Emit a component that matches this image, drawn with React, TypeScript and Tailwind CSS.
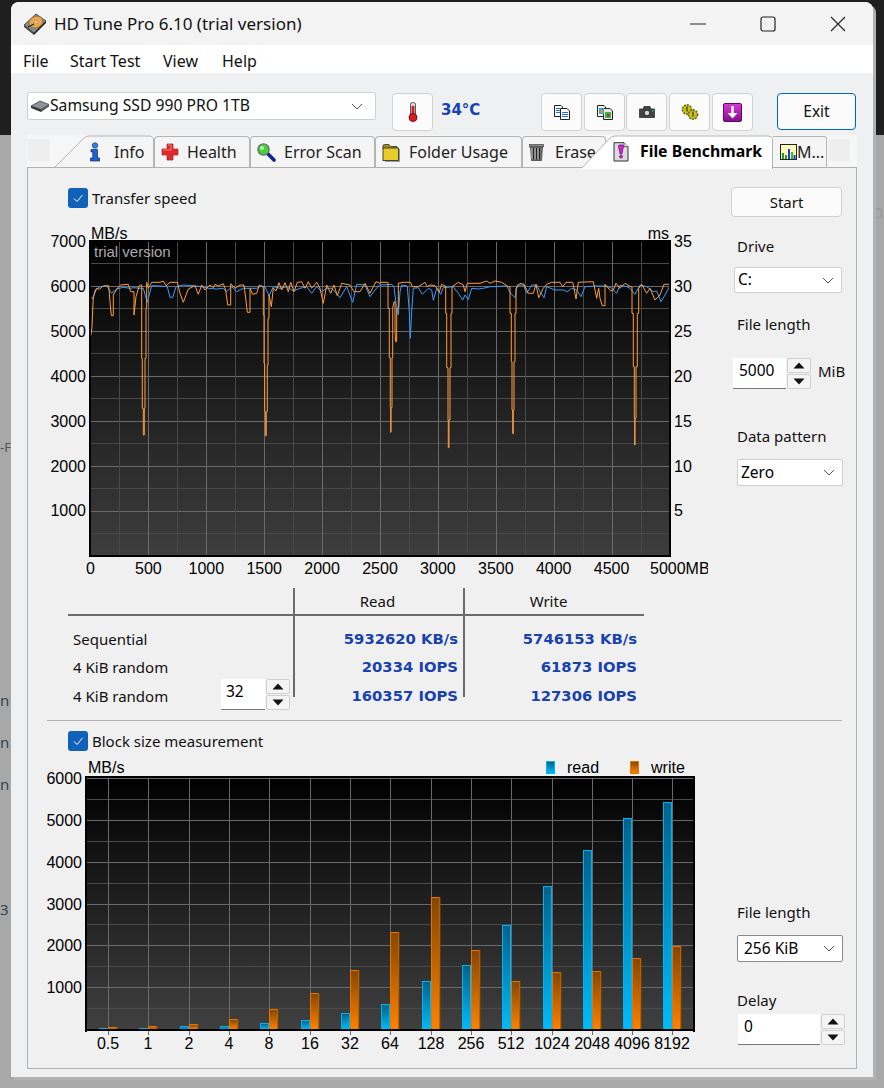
import React from "react";

const F = "[font-family:'Noto_Sans',sans-serif]";

const o3: number[][] = [[93,330],[96,305],[98,255],[100,215],[104,205],[110,190],[118,193],[130,183],[146,182],[150,230],[154,272],[160,210],[172,190],[182,180],[205,178],[212,200],[222,270],[228,215],[238,182],[242,180],[245,400],[247,550],[250,630],[253,550],[255,400],[258,250],[260,172],[265,190],[275,172],[300,172],[310,168],[318,182],[330,172],[352,172],[360,205],[370,232],[385,192],[405,182],[415,208],[425,180],[435,195],[450,180],[460,188],[465,178],[475,183],[490,176],[497,195],[503,240],[512,176],[525,190],[540,180],[552,180],[557,220],[562,262],[570,190],[578,208],[590,205],[598,180],[607,185],[610,270],[612,415],[614,560],[616,632],[619,560],[622,420],[624,280],[627,210],[634,245],[640,190],[648,198],[657,173],[665,195],[675,173],[685,200],[692,172],[702,200],[712,172],[725,170],[735,190],[745,170],[755,190],[770,172],[780,190],[790,235],[800,180],[812,205],[822,180],[832,212],[845,175],[870,180],[882,200],[900,200],[915,175],[930,205],[940,185],[948,170],[960,175]];
const b3: number[][] = [[93,215],[100,222],[105,195],[120,185],[140,183],[155,205],[170,192],[190,187],[210,190],[222,188],[240,190],[250,190],[262,232],[275,182],[300,183],[322,185],[330,217],[338,217],[348,185],[370,180],[400,182],[425,185],[445,190],[470,192],[490,190],[500,200],[515,185],[530,200],[550,190],[570,190],[590,190],[605,183],[615,185],[627,212],[640,185],[660,190],[680,185],[700,198],[720,190],[740,185],[755,205],[770,185],[785,200],[800,190],[815,190],[840,218],[860,185],[878,232],[890,178],[915,180],[930,215],[945,195],[960,178]];
const o4: number[][] = [[0,172],[22,172],[24,250],[28,398],[31,548],[32,622],[33,548],[36,398],[38,250],[42,230],[45,320],[47,350],[50,250],[55,175],[70,172],[92,172],[97,185],[115,185],[135,172],[142,185],[150,180],[165,182],[178,200],[185,178],[195,183],[197,265],[200,428],[204,585],[205,668],[207,585],[210,428],[213,265],[216,185],[235,172],[250,180],[255,200],[262,175],[300,175],[320,168],[330,175],[345,168],[365,172],[385,185],[390,265],[394,410],[396,555],[398,626],[400,555],[402,410],[405,265],[408,190],[420,175],[432,178],[445,205],[460,205],[468,178],[476,218],[490,190],[500,178],[515,172],[540,172],[548,185],[558,172],[578,172],[585,205],[588,222],[595,172],[640,170],[645,195],[650,220],[656,190],[660,220],[667,242],[675,178],[692,198],[700,195],[708,175],[720,190],[735,175],[752,185],[756,265],[760,425],[763,580],[764,660],[765,580],[768,425],[772,265],[776,190],[785,178],[800,205],[810,190],[825,225],[840,210],[852,178],[868,178]];
const b4: number[][] = [[0,180],[35,178],[42,185],[48,235],[55,270],[60,200],[65,180],[82,183],[88,260],[91,340],[95,260],[100,190],[115,188],[127,208],[145,190],[155,195],[160,226],[170,190],[182,208],[190,188],[220,185],[235,205],[248,225],[255,210],[265,224],[275,190],[295,192],[310,190],[330,185],[380,183],[392,205],[405,218],[412,180],[430,180],[440,205],[455,180],[470,180],[480,200],[492,218],[500,185],[525,195],[550,195],[562,200],[575,190],[590,195],[603,215],[615,185],[650,183],[680,183],[695,190],[710,205],[720,180],[740,185],[750,190],[765,208],[780,180],[800,185],[820,200],[830,198],[843,230],[855,210],[868,185]];

const pts = (a: number[][], ox: number) => a.map(([x, y]) => `${(x / 3 + ox).toFixed(1)},${(y / 3 + 225).toFixed(1)}`).join(" ");

// Large jumps in the write trace are drawn as stairs, as the original plot does.
const stairs = (a: number[][]) => {
  const out: number[][] = [];
  a.forEach((p, i) => {
    if (i > 0 && Math.abs(p[1] - a[i - 1][1]) > 60) out.push([p[0], a[i - 1][1]]);
    out.push(p);
  });
  return out;
};

function SpeedChart() {
  const hs = Array.from({ length: 15 }, (_, i) => 241 + 22.5 * i);
  const vs = Array.from({ length: 20 }, (_, i) => 90 + 29 * i);
  return (
    <svg width={664} height={352} viewBox="44 225 664 352" className="block" fontFamily="'Liberation Sans',sans-serif" fontSize={16} fill="#000">
      <defs>
        <linearGradient id="g1" x1="0" y1="0" x2="0" y2="1">
          <stop offset="0" stopColor="#000" />
          <stop offset="1" stopColor="#3e3e3e" />
        </linearGradient>
      </defs>
      <rect x={90} y={241} width={580} height={315} fill="url(#g1)" />
      {hs.map((y, i) => (
        <line key={i} x1={90} x2={670} y1={Math.floor(y) + 0.5} y2={Math.floor(y) + 0.5} stroke={i % 2 === 0 ? "#6a6a6a" : "#484848"} />
      ))}
      {vs.map((x, i) => (
        <line key={i} x1={x + 0.5} x2={x + 0.5} y1={241} y2={556} stroke={i % 2 === 0 ? "#6a6a6a" : "#484848"} />
      ))}
      <polyline points={pts(b3, 60)} fill="none" stroke="#3c9bff" strokeWidth={1} />
      <polyline points={pts(b4, 380)} fill="none" stroke="#3c9bff" strokeWidth={1} />
      <polyline points={pts(stairs(o3), 60)} fill="none" stroke="#ff9c3e" strokeWidth={1} />
      <polyline points={pts(stairs(o4), 380)} fill="none" stroke="#ff9c3e" strokeWidth={1} />
      <rect x={89} y={240} width={582} height={2} fill="#000" />
      <rect x={89} y={240} width={2} height={317} fill="#000" />
      <rect x={89} y={555} width={582} height={2} fill="#000" />
      <rect x={669} y={240} width={2} height={317} fill="#000" />
      <text x={91} y={239}>MB/s</text>
      <text x={669} y={239} textAnchor="end">ms</text>
      <text x={94} y={257} fontSize={15} fill="#a8a8a8">trial version</text>
      {[7000, 6000, 5000, 4000, 3000, 2000, 1000].map((v, i) => (
        <text key={v} x={86} y={247 + 44.9 * i} textAnchor="end">{v}</text>
      ))}
      {[35, 30, 25, 20, 15, 10, 5].map((v, i) => (
        <text key={v} x={674} y={247 + 44.9 * i}>{v}</text>
      ))}
      {[0, 500, 1000, 1500, 2000, 2500, 3000, 3500, 4000, 4500].map((v, i) => (
        <text key={v} x={90.5 + 57.9 * i} y={574} textAnchor="middle">{v}</text>
      ))}
      <text x={650} y={574}>5000MB</text>
    </svg>
  );
}

const reads = [1028, 1028, 1026, 1026, 1023, 1020, 1013, 1004, 981, 965, 925, 886, 850, 818, 802];
const writes = [1027, 1026, 1024, 1019, 1009, 993, 970, 932, 897, 950, 981, 972, 971, 958, 946];
const cats = ["0.5", "1", "2", "4", "8", "16", "32", "64", "128", "256", "512", "1024", "2048", "4096", "8192"];

function BlockChart() {
  const hs = Array.from({ length: 12 }, (_, i) => 778 + 20.92 * i);
  const c = (i: number) => Math.round(108 + 40.32 * i);
  return (
    <svg width={664} height={300} viewBox="44 756 664 300" className="block" fontFamily="'Liberation Sans',sans-serif" fontSize={16} fill="#000">
      <defs>
        <linearGradient id="g2" x1="0" y1="0" x2="0" y2="1">
          <stop offset="0" stopColor="#000" />
          <stop offset="1" stopColor="#404040" />
        </linearGradient>
        <linearGradient id="rb" x1="0" y1="0" x2="0" y2="1">
          <stop offset="0" stopColor="#00628a" />
          <stop offset="1" stopColor="#00bcfc" />
        </linearGradient>
        <linearGradient id="wb" x1="0" y1="0" x2="0" y2="1">
          <stop offset="0" stopColor="#854600" />
          <stop offset="1" stopColor="#ff8200" />
        </linearGradient>
      </defs>
      <rect x={87} y={778} width={607} height={252} fill="url(#g2)" />
      {hs.map((y, i) => (
        <line key={i} x1={87} x2={695} y1={Math.round(y) + 0.5} y2={Math.round(y) + 0.5} stroke={i % 2 === 0 ? "#6a6a6a" : "#4a4a4a"} />
      ))}
      {cats.map((_, i) => (
        <line key={i} x1={c(i) + 0.5} x2={c(i) + 0.5} y1={778} y2={1035} stroke="#6a6a6a" />
      ))}
      {cats.map((_, i) => (
        <g key={i}>
          <rect x={c(i) - 8.5} y={reads[i] + 0.5} width={8} height={1029 - reads[i]} fill="url(#rb)" stroke="#00b4f4" />
          <rect x={c(i) + 0.5} y={writes[i] + 0.5} width={8} height={1029 - writes[i]} fill="url(#wb)" stroke="#e87400" />
          <line x1={c(i) + 9} x2={c(i) + 9} y1={writes[i]} y2={1029} stroke="#8a4a00" />
        </g>
      ))}
      <rect x={85} y={776} width={610} height={2} fill="#000" />
      <rect x={85} y={776} width={2} height={256} fill="#000" />
      <rect x={85} y={1029} width={610} height={2} fill="#000" />
      <rect x={693} y={776} width={2} height={256} fill="#000" />
      {cats.map((_, i) => (
        <line key={i} x1={c(i) + 0.5} x2={c(i) + 0.5} y1={1031} y2={1035} stroke="#6a6a6a" />
      ))}
      <text x={88} y={773}>MB/s</text>
      {[6000, 5000, 4000, 3000, 2000, 1000].map((v, i) => (
        <text key={v} x={82} y={784 + 41.84 * i} textAnchor="end">{v}</text>
      ))}
      {cats.map((t, i) => (
        <text key={t} x={c(i)} y={1049} textAnchor="middle">{t}</text>
      ))}
      <rect x={546.5} y={761.5} width={8} height={12} fill="url(#rb)" stroke="#00b4f4" />
      <text x={567} y={773}>read</text>
      <rect x={630.5} y={761.5} width={8} height={12} fill="url(#wb)" stroke="#e87400" />
      <text x={651} y={773}>write</text>
    </svg>
  );
}

const Check = () => (
  <span className="w-[20px] h-[20px] rounded-[3px] bg-[#0f62b8] flex items-center justify-center shrink-0">
    <svg width="12" height="12" viewBox="0 0 12 12" fill="none" stroke="#fff" strokeWidth="1">
      <path d="M2 6.5 L5 9.5 L10.5 3" />
    </svg>
  </span>
);

const Chevron = () => (
  <svg width="12" height="7" viewBox="0 0 12 7" fill="none" stroke="#555" strokeWidth="1">
    <path d="M1 1 L6 6 L11 1" />
  </svg>
);

function Select({ text, className, dark }: { text: string; className: string; dark?: boolean }) {
  return (
    <div className={`${className} ${dark ? "border-[#8a8a8a]" : "border-[#cfcfcf]"} bg-white border rounded-[2px] flex items-center justify-between pr-[7px] text-[15.5px] text-black`}>
      <span className="leading-none">{text}</span>
      <Chevron />
    </div>
  );
}

function Spin() {
  return (
    <div className="flex flex-col justify-between w-[24px] h-full">
      <div className="h-[15px] bg-[#f4f4f4] border border-[#d0d0d0] rounded-[2px] flex items-center justify-center">
        <svg width="12" height="7" viewBox="0 0 12 7"><path d="M6 0.5 L11.5 6.5 H0.5 Z" fill="#111" /></svg>
      </div>
      <div className="h-[15px] bg-[#f4f4f4] border border-[#d0d0d0] rounded-[2px] flex items-center justify-center">
        <svg width="12" height="7" viewBox="0 0 12 7"><path d="M0.5 0.5 H11.5 L6 6.5 Z" fill="#111" /></svg>
      </div>
    </div>
  );
}

function Spinner({ value, w, pl }: { value: string; w: string; pl: string }) {
  return (
    <div className="flex h-[31px] gap-[1px]">
      <div className={`${w} ${pl} bg-white border-b border-[#7a7a7a] text-[15.5px] text-black leading-[24px]`}>{value}</div>
      <Spin />
    </div>
  );
}

/* ---------- icons ---------- */
const DiskLogo = () => (
  <svg width="24" height="24" viewBox="0 0 24 24">
    <path d="M1 13 L13 2 L23 9 L11 21 Z" fill="#8a8a8a" stroke="#333" strokeWidth="0.8" />
    <path d="M1 13 L11 21 L11 23 L1 15 Z" fill="#444" />
    <path d="M11 21 L23 9 L23 11 L11 23 Z" fill="#222" />
    <ellipse cx="13" cy="10" rx="7" ry="5.5" transform="rotate(-25 13 10)" fill="#e8a64f" stroke="#9a6a28" strokeWidth="0.6" />
    <circle cx="13" cy="10" r="1.6" fill="#f6d9a6" stroke="#9a6a28" strokeWidth="0.4" />
    <path d="M5 15 L11 12" stroke="#222" strokeWidth="1.2" />
  </svg>
);
const InfoIcon = () => (
  <svg width="14" height="20" viewBox="0 0 14 20">
    <circle cx="7" cy="3.5" r="2.8" fill="#2f7fe8" stroke="#12357e" strokeWidth="0.6" />
    <path d="M3 7.5 H9.5 V16 H11.5 V19 H2.5 V16 H4.8 V10 H3 Z" fill="#1d62d6" stroke="#0d2660" strokeWidth="0.7" />
  </svg>
);
const CrossIcon = () => (
  <svg width="18" height="18" viewBox="0 0 18 18">
    <path d="M6 1 H12 V6 H17 V12 H12 V17 H6 V12 H1 V6 H6 Z" fill="#e5292b" stroke="#8c3a3a" strokeWidth="0.8" />
    <path d="M7 2 H10 V7 H2 V7" fill="none" stroke="#ff8d8d" strokeWidth="0.8" />
  </svg>
);
const SearchIcon = () => (
  <svg width="20" height="20" viewBox="0 0 20 20">
    <path d="M11 11 L18 18" stroke="#12288c" strokeWidth="3.6" strokeLinecap="round" />
    <circle cx="7.5" cy="7.5" r="5.6" fill="#46d23a" stroke="#6a6a6a" strokeWidth="1.3" />
    <circle cx="6" cy="6" r="2" fill="#b6f5a8" />
  </svg>
);
const FolderIcon = () => (
  <svg width="18" height="19" viewBox="0 0 18 19">
    <path d="M1 3 Q1 1.5 2.5 1.5 H7 L9 3.5 H15 V6 H1 Z" fill="#a08a18" stroke="#333" strokeWidth="0.8" />
    <rect x="1" y="5" width="15.5" height="12.5" fill="#e8cd2a" stroke="#333" strokeWidth="0.9" />
    <path d="M17.5 6 V18.5 H3" fill="none" stroke="#999" strokeWidth="1" />
  </svg>
);
const TrashIcon = () => (
  <svg width="15" height="18" viewBox="0 0 15 18">
    <rect x="0.5" y="1.5" width="14" height="2.5" fill="#8a8a8a" stroke="#333" strokeWidth="0.6" />
    <path d="M1.5 4 H13.5 L12.5 17.5 H2.5 Z" fill="#7a7a7a" stroke="#333" strokeWidth="0.7" />
    <path d="M4.5 5 V16.5 M7.5 5 V16.5 M10.5 5 V16.5" stroke="#222" strokeWidth="1.3" />
    <path d="M3 5 V16 M6 5 V16 M9 5 V16" stroke="#c8c8c8" strokeWidth="0.8" />
  </svg>
);
const BenchIcon = () => (
  <svg width="16" height="20" viewBox="0 0 16 20">
    <path d="M1 0.7 H11 L15 4.7 V19 H1 Z" fill="#dcdcdc" stroke="#333" strokeWidth="1" />
    <path d="M11 0.7 V4.7 H15" fill="#fff" stroke="#333" strokeWidth="0.8" />
    <path d="M5.3 3.5 Q8 2 10.7 3.5 L9 12 H7 Z" fill="#d020d8" stroke="#5a0a60" strokeWidth="0.6" />
    <circle cx="8" cy="14.6" r="1.6" fill="#d020d8" stroke="#5a0a60" strokeWidth="0.5" />
  </svg>
);
const ChartIcon = () => (
  <svg width="17" height="16" viewBox="0 0 17 16">
    <rect x="0.5" y="0.5" width="16" height="15" fill="#fdfdb8" stroke="#222" />
    <path d="M2 15 V9 H4 V15 Z M5 15 V11 H7 V15 Z" fill="#1f9d2a" />
    <path d="M8 15 V5 H10 V15 Z" fill="#2c2cf0" />
    <path d="M11 15 V8 H13 V15 Z" fill="#14d414" />
    <path d="M13.5 15 V11 H15.5 V15 Z" fill="#2c2cf0" />
  </svg>
);
const Thermo = () => (
  <svg width="12" height="20" viewBox="0 0 12 20">
    <rect x="3.5" y="0.5" width="5" height="14" rx="2" fill="#d8d8d8" stroke="#333" strokeWidth="0.8" />
    <rect x="4.6" y="4" width="2.8" height="11" fill="#d81820" />
    <circle cx="6" cy="15.5" r="4" fill="#e01a20" stroke="#4a0a0a" strokeWidth="0.8" />
  </svg>
);
const CopyDocs = ({ pics }: { pics?: boolean }) => (
  <svg width="16" height="15" viewBox="0 0 16 15">
    <path d="M0.5 0.5 H7 L8.5 2 V11.5 H0.5 Z" fill="#fff" stroke="#222" />
    <path d="M6.5 3.5 H13 L15.5 6 V14.5 H6.5 Z" fill={pics ? "#e8e8e8" : "#fff"} stroke="#222" />
    {pics ? (
      <>
        <rect x="2" y="3" width="5" height="6" fill="#27a7df" />
        <rect x="3" y="5" width="3" height="3" fill="#e98a2c" />
        <rect x="8" y="7" width="6" height="6" fill="#2cb84c" />
        <rect x="10" y="9" width="2.5" height="2.5" fill="#d82020" />
      </>
    ) : (
      <>
        <path d="M2 3.5 H6 M2 5.5 H6 M2 7.5 H6" stroke="#1e6fe0" />
        <path d="M8 7.5 H14 M8 9.5 H14 M8 11.5 H14" stroke="#1e6fe0" />
      </>
    )}
  </svg>
);
const Camera = () => (
  <svg width="16" height="12" viewBox="0 0 16 12">
    <path d="M0.5 3 H4 L5 0.5 H11 L12 3 H15.5 V11.5 H0.5 Z" fill="#444" stroke="#222" strokeWidth="0.7" />
    <circle cx="8" cy="7" r="2.8" fill="#d8d8d8" stroke="#111" strokeWidth="0.8" />
    <rect x="13" y="4" width="1.8" height="1.4" fill="#22c040" />
  </svg>
);
const Gears = () => (
  <svg width="18" height="16" viewBox="0 0 18 16">
    <circle cx="6" cy="5.5" r="4.6" fill="#c9c020" stroke="#6d6a10" strokeWidth="1.6" strokeDasharray="2 1" />
    <circle cx="12" cy="10.5" r="4.6" fill="#c9c020" stroke="#6d6a10" strokeWidth="1.6" strokeDasharray="2 1" />
    <path d="M6 2.5 V7.5 M12 7.5 V12.5" stroke="#5a5810" strokeWidth="1.6" />
  </svg>
);
const PurpleDown = () => (
  <svg width="19" height="19" viewBox="0 0 19 19">
    <defs>
      <linearGradient id="pd" x1="0" y1="0" x2="0" y2="1">
        <stop offset="0" stopColor="#d63ad6" />
        <stop offset="1" stopColor="#8a0a90" />
      </linearGradient>
    </defs>
    <rect x="0.5" y="0.5" width="18" height="18" rx="1.5" fill="url(#pd)" stroke="#5e0a66" />
    <path d="M8.3 3 H10.7 V10 H14.5 L9.5 15.5 L4.5 10 H8.3 Z" fill="#fff" />
  </svg>
);
const DriveIcon = () => (
  <svg width="20" height="13" viewBox="0 0 20 13">
    <path d="M1 6 L10 1 L19 4.5 L11 9.5 Z" fill="#8f9296" stroke="#333" strokeWidth="0.7" />
    <path d="M1 6 L11 9.5 V12 L1 8 Z" fill="#333" />
    <path d="M11 9.5 L19 4.5 V6.5 L11 12 Z" fill="#555" />
  </svg>
);

function Tab({ w, pl, gap, icon, label }: { w: string; pl: string; gap: string; icon: React.ReactNode; label: string }) {
  return (
    <div className={`${w} ${pl} h-[31px] mt-[1px] shrink-0 bg-[#f5f5f5] border border-b-0 border-[#b4b4b4] rounded-t-[4px] flex items-center text-[16px] text-[#222] overflow-hidden whitespace-nowrap`}>
      <span className={`${gap} shrink-0 flex items-center`}>{icon}</span>
      <span>{label}</span>
    </div>
  );
}

function IconBtn({ children, w = "w-[41px]", cls = "" }: { children: React.ReactNode; w?: string; cls?: string }) {
  return (
    <div className={`${w} ${cls} h-[38px] bg-[#fbfbfb] border border-[#d2d2d2] rounded-[4px] flex items-center justify-center shrink-0`}>
      {children}
    </div>
  );
}

const V = "text-[#1742b0] font-bold [font-family:'DejaVu_Sans',sans-serif] text-[14.8px] leading-[20px] text-right whitespace-nowrap";
const L = "border-l-2 border-[#6b6b6b]";

export default function App() {
  return (
    <div className={`relative w-[884px] h-[1088px] overflow-hidden bg-[#a8a8a8] ${F}`}>
      <div className="h-[135px] bg-[#1f1f1f]" />
      <div className="absolute left-0 top-[441px] text-[13px] text-[#555] leading-none">-F</div>
      <div className="absolute left-0 top-[693px] text-[15px] text-[#345] leading-none">n</div>
      <div className="absolute left-0 top-[735px] text-[15px] text-[#345] leading-none">n</div>
      <div className="absolute left-0 top-[777px] text-[15px] text-[#345] leading-none">n</div>
      <div className="absolute left-0 top-[902px] text-[15px] text-[#345] leading-none">3</div>
      <div className="absolute left-[873px] top-[206px] text-[14px] text-[#999] leading-none">Da</div>

      <div className="absolute left-[11px] top-[2px] w-[862px] h-[1075px] rounded-t-[8px] overflow-hidden bg-[#eff0f1] flex flex-col text-black shadow-[3px_3px_0_#b2b2b2]">
        {/* title bar */}
        <div className="h-[43px] bg-[#f3f3f3] flex items-center shrink-0">
          <div className="ml-[12px] w-[31px]"><DiskLogo /></div>
          <div className="text-[17px] text-[#111]">HD Tune Pro 6.10 (trial version)</div>
          <div className="ml-auto flex">
            <div className="w-[70px] h-[43px] flex items-center justify-center">
              <svg width="16" height="2" viewBox="0 0 16 2"><path d="M0 1 H16" stroke="#222" strokeWidth="1" /></svg>
            </div>
            <div className="w-[70px] h-[43px] flex items-center justify-center">
              <svg width="16" height="16" viewBox="0 0 16 16"><rect x="1" y="1" width="14" height="14" rx="2" fill="none" stroke="#222" strokeWidth="1.2" /></svg>
            </div>
            <div className="w-[70px] h-[43px] flex items-center justify-center">
              <svg width="16" height="16" viewBox="0 0 16 16"><path d="M1 1 L15 15 M15 1 L1 15" stroke="#222" strokeWidth="1.1" /></svg>
            </div>
          </div>
        </div>
        {/* menu */}
        <div className="h-[28px] bg-white flex items-center pl-[12px] pt-[3px] text-[16px] text-[#111] shrink-0">
          <div className="w-[47px]">File</div>
          <div className="w-[93px]">Start Test</div>
          <div className="w-[59px]">View</div>
          <div>Help</div>
        </div>
        {/* toolbar */}
        <div className="h-[43px] mt-[19px] pl-[16px] flex items-start shrink-0">
          <div className="w-[349px] h-[28px] bg-white border border-[#d0d0d0] rounded-[2px] flex items-center pl-[2px] pr-[12px] text-[15.7px] text-[#111]">
            <DriveIcon />
            <span>Samsung SSD 990 PRO 1TB</span>
            <span className="ml-auto"><Chevron /></span>
          </div>
          <div className="ml-[16px] mt-[1px]"><IconBtn><Thermo /></IconBtn></div>
          <div className="ml-[8px] mt-[8px] w-[100px] text-[#1742b0] font-bold text-[15px] leading-[20px] [font-family:'DejaVu_Sans',sans-serif]">34°C</div>
          <div className="mt-[1px] flex gap-[2px]">
            <IconBtn><CopyDocs /></IconBtn>
            <IconBtn><CopyDocs pics /></IconBtn>
            <IconBtn cls="-ml-[1px]"><Camera /></IconBtn>
            <IconBtn><Gears /></IconBtn>
            <IconBtn><PurpleDown /></IconBtn>
          </div>
          <div className="ml-[24px] mt-[1px] w-[79px] h-[37px] bg-[#fbfbfb] border border-[#0067c0] rounded-[4px] flex items-center justify-center text-[15.5px] text-[#111]">Exit</div>
        </div>
        {/* tabs */}
        <div className="ml-[16px] w-[830px] h-[32px] bg-[#f6f6f6] flex items-start shrink-0 relative z-10">
          <div className="w-[22px] h-[22px] mt-[4px] ml-[1px] bg-[#eeeeee] shrink-0" />
          <div className="w-[5px] shrink-0" />
          <div className="relative w-[99px] h-[32px] shrink-0 flex items-center pl-[33px] pt-[2px] text-[16px] text-[#222]">
            <svg className="absolute left-0 top-0" width="99" height="32" viewBox="0 0 99 32">
              <path d="M0 32 L29 3 Q31 1 34 1 H94 Q98.5 1 98.5 5 V32" fill="#f5f5f5" stroke="#b4b4b4" />
            </svg>
            <span className="relative w-[26px] shrink-0 flex"><InfoIcon /></span>
            <span className="relative">Info</span>
          </div>
          <Tab w="w-[96px]" pl="pl-[6px]" gap="w-[26px]" icon={<CrossIcon />} label="Health" />
          <Tab w="w-[125px]" pl="pl-[5px]" gap="w-[28px]" icon={<SearchIcon />} label="Error Scan" />
          <Tab w="w-[147px]" pl="pl-[6px]" gap="w-[27px]" icon={<FolderIcon />} label="Folder Usage" />
          <Tab w="w-[84px]" pl="pl-[6px]" gap="w-[26px]" icon={<TrashIcon />} label="Erase" />
          <div className="relative -ml-[24px] w-[191px] h-[34px] shrink-0 flex items-center pl-[31px] z-10">
            <svg className="absolute left-0 top-0" width="191" height="34" viewBox="0 0 191 34">
              <path d="M0 33 L27 4 Q30 1 33 1 H186 Q190.5 1 190.5 5 V34 H0 Z" fill="#fff" />
              <path d="M0 33 L27 4 Q30 1 33 1 H186 Q190.5 1 190.5 5 V34" fill="none" stroke="#b4b4b4" />
            </svg>
            <span className="relative w-[27px] shrink-0 flex"><BenchIcon /></span>
            <span className="relative font-bold text-[15.8px] text-black whitespace-nowrap">File Benchmark</span>
          </div>
          <div className="w-[54px] h-[31px] mt-[1px] shrink-0 bg-[#f5f5f5] border border-l-0 border-b-0 border-[#b4b4b4] rounded-tr-[3px] flex items-center pl-[7px] text-[16px] text-[#222]">
            <ChartIcon />
            <span>M...</span>
          </div>
          <div className="w-[22px] h-[22px] mt-[4px] ml-[1px] bg-[#eeeeee] shrink-0" />
        </div>
        {/* panel */}
        <div className="ml-[16px] w-[830px] h-[902px] bg-[#f0f0f0] border border-[#b0b0b0] flex flex-col shrink-0 text-[15px] text-[#111]">
          <div className="h-[552px] flex shrink-0">
            <div className="w-[703px] shrink-0 flex flex-col">
              <div className="ml-[40px] mt-[20px] flex items-center gap-[4px] h-[20px] shrink-0">
                <Check />
                <span className="pt-[1px]">Transfer speed</span>
              </div>
              <div className="ml-[16px] mt-[17px] shrink-0"><SpeedChart /></div>
              {/* table */}
              <div className="ml-[40px] mt-[11px] w-[576px] shrink-0">
                <div className="flex h-[28px] border-b-2 border-[#6b6b6b]">
                  <div className="w-[225px]" />
                  <div className={`w-[170px] ${L} text-center pt-[2px] pr-[3px]`}>Read</div>
                  <div className={`w-[181px] ${L} text-center pt-[2px] pr-[12px]`}>Write</div>
                </div>
                <div className="flex h-[37px]">
                  <div className="w-[225px] pl-[5px] pt-[12px]">Sequential</div>
                  <div className={`w-[170px] ${L} pt-[13px] pr-[5px] ${V}`}>5932620 KB/s</div>
                  <div className={`w-[181px] ${L} pt-[13px] pr-[7px] ${V}`}>5746153 KB/s</div>
                </div>
                <div className="flex h-[28px]">
                  <div className="w-[225px] pl-[5px] pt-[3px]">4 KiB random</div>
                  <div className={`w-[170px] ${L} pt-[4px] pr-[5px] ${V}`}>20334 IOPS</div>
                  <div className={`w-[181px] ${L} pt-[4px] pr-[7px] ${V}`}>61873 IOPS</div>
                </div>
                <div className="flex h-[16px]">
                  <div className="w-[225px] pl-[5px] flex items-start">
                    <span className="w-[148px] pt-[4px] shrink-0">4 KiB random</span>
                    <div className="-mt-[2px]"><Spinner value="32" w="w-[44px]" pl="pl-[5px]" /></div>
                  </div>
                  <div className={`w-[170px] ${L} pt-[5px] pr-[5px] ${V}`}>160357 IOPS</div>
                  <div className={`w-[181px] ${L} pt-[5px] pr-[7px] ${V}`}>127306 IOPS</div>
                </div>
              </div>
            </div>
            <div className="flex flex-col shrink-0 w-[125px]">
              <div className="mt-[19px] w-[111px] h-[30px] bg-[#fbfbfb] border border-[#d0d0d0] rounded-[4px] flex items-center justify-center shrink-0 pt-[1px]">Start</div>
              <div className="mt-[18px] ml-[6px] h-[22px] leading-[22px] shrink-0">Drive</div>
              <Select text="C:" className="mt-[10px] ml-[3px] w-[108px] h-[26px] pl-[3px] shrink-0" />
              <div className="mt-[20px] ml-[6px] h-[22px] leading-[22px] shrink-0">File length</div>
              <div className="mt-[23px] ml-[2px] flex items-center shrink-0">
                <Spinner value="5000" w="w-[53px]" pl="pl-[6px]" />
                <span className="ml-[7px] -mt-[4px]">MiB</span>
              </div>
              <div className="mt-[36px] ml-[6px] h-[22px] leading-[22px] shrink-0">Data pattern</div>
              <Select text="Zero" className="mt-[12px] ml-[6px] w-[106px] h-[27px] pl-[3px] shrink-0" />
            </div>
          </div>
          <div className="ml-[19px] w-[795px] h-[1px] bg-[#b4b4b4] shrink-0" />
          <div className="flex flex-1">
            <div className="w-[703px] shrink-0 flex flex-col">
              <div className="ml-[40px] mt-[10px] flex items-center gap-[4px] h-[20px] shrink-0">
                <Check />
                <span className="pt-[1px]">Block size measurement</span>
              </div>
              <div className="ml-[16px] mt-[5px] shrink-0"><BlockChart /></div>
            </div>
            <div className="flex flex-col shrink-0 w-[125px]">
              <div className="mt-[180px] ml-[6px] h-[22px] leading-[22px] shrink-0">File length</div>
              <Select text="256 KiB" dark className="mt-[12px] ml-[6px] w-[106px] h-[27px] pl-[6px] shrink-0" />
              <div className="mt-[27px] ml-[6px] h-[22px] leading-[22px] shrink-0">Delay</div>
              <div className="mt-[3px] ml-[7px] shrink-0">
                <Spinner value="0" w="w-[82px]" pl="pl-[6px]" />
              </div>
            </div>
          </div>
        </div>
      </div>
    </div>
  );
}
